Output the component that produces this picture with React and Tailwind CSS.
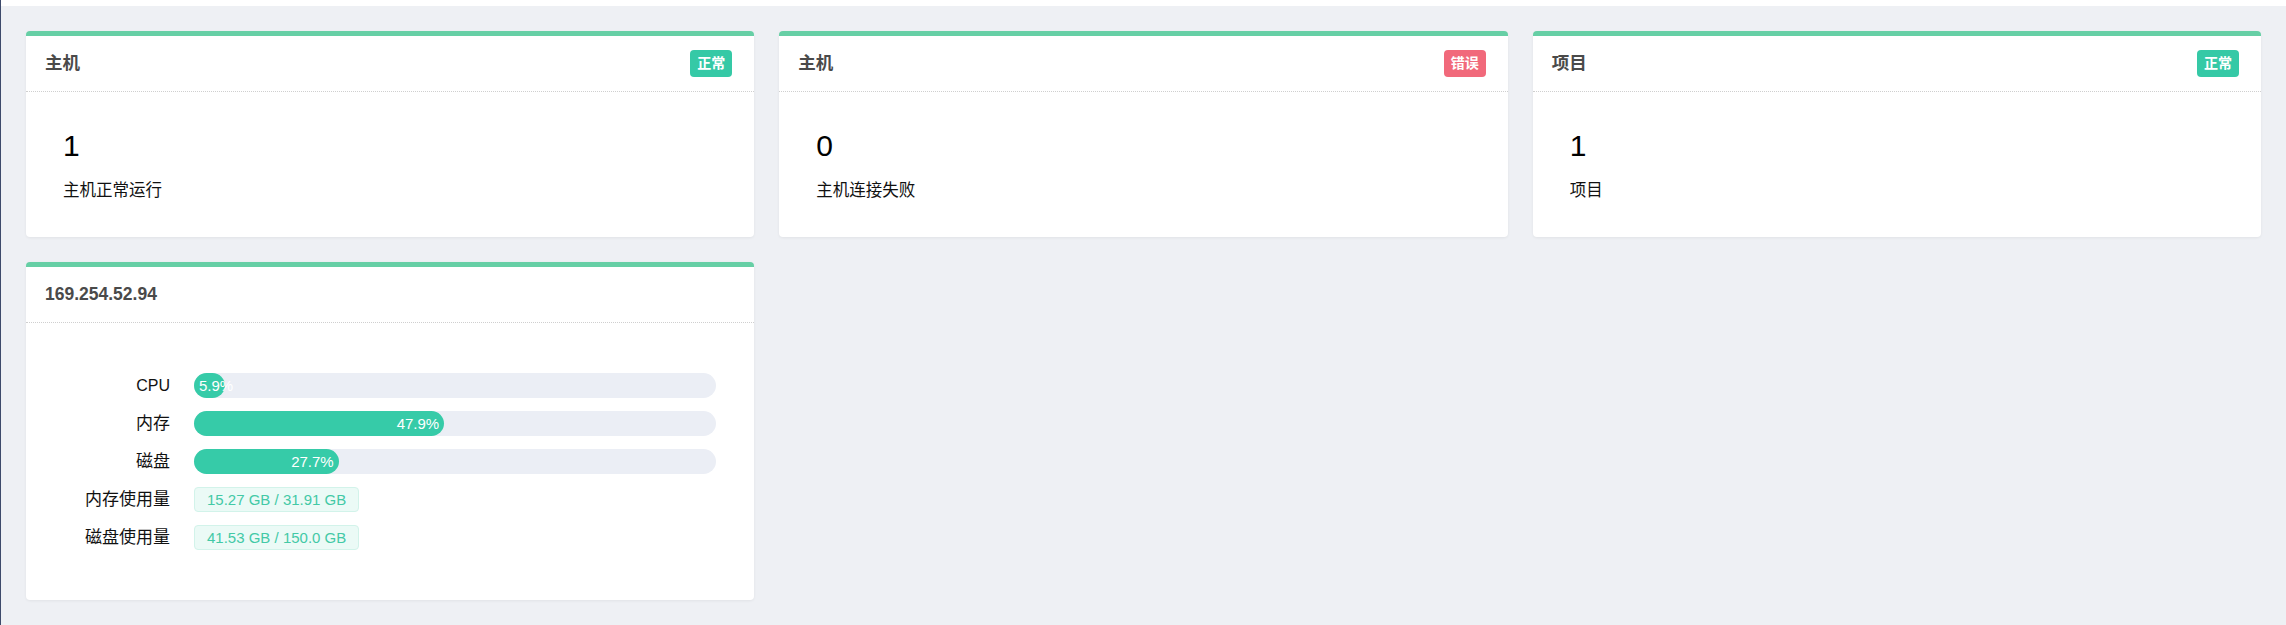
import React from "react";

const stats = [
  { title: "主机", badge: "正常", ok: true, value: "1", label: "主机正常运行" },
  { title: "主机", badge: "错误", ok: false, value: "0", label: "主机连接失败" },
  { title: "项目", badge: "正常", ok: true, value: "1", label: "项目" },
];

const bars = [
  { name: "CPU", pct: 5.9 },
  { name: "内存", pct: 47.9 },
  { name: "磁盘", pct: 27.7 },
];

const usage = [
  { name: "内存使用量", text: "15.27 GB / 31.91 GB" },
  { name: "磁盘使用量", text: "41.53 GB / 150.0 GB" },
];

const Card = ({ title, badge, children }) => (
  <div className="bg-white rounded-[4px] border-t-[5px] border-[#66cfa5] shadow-[0_1px_3px_rgba(0,0,0,0.06)]">
    <div className="h-[55px] flex items-center justify-between pl-[19px] pr-[22px]">
      <span className="text-[17.5px] font-bold text-[#4a4a4a]">{title}</span>
      {badge}
    </div>
    <div className="border-t border-dotted border-[#cfcfcf]" />
    {children}
  </div>
);

const Badge = ({ ok, children }) => (
  <span
    className={
      ok
        ? "h-[27px] leading-[27px] px-[7px] rounded-[4px] text-[14px] font-bold text-white bg-[#35c9a6]"
        : "h-[27px] leading-[27px] px-[7px] rounded-[4px] text-[14px] font-bold text-white bg-[#f1697b]"
    }
  >
    {children}
  </span>
);

const Label = ({ children, latin }) => (
  <div className={latin ? "w-[106px] text-right text-[16px] text-[#111]" : "w-[106px] text-right text-[17px] text-[#111]"}>
    {children}
  </div>
);

export default function App() {
  return (
    <div className="flex h-[625px] font-['Liberation_Sans','Noto_Sans_CJK_SC',sans-serif]">
      <div className="w-px bg-[#3d4a6b]" />
      <div className="flex-1 flex flex-col">
        <div className="h-[6px] bg-white" />
        <div className="flex-1 bg-[#eef0f4] p-[25px]">
          <div className="grid grid-cols-3 gap-[25px]">
            {stats.map((s, i) => (
              <Card key={i} title={s.title} badge={<Badge ok={s.ok}>{s.badge}</Badge>}>
                <div className="pt-[39px] pb-[35px] pl-[37px]">
                  <div className="text-[30px] leading-[30px] text-black">{s.value}</div>
                  <div className="mt-[17px] text-[16.5px] leading-[24px] text-[#111]">{s.label}</div>
                </div>
              </Card>
            ))}
          </div>

          <div className="grid grid-cols-3 gap-[25px] mt-[25px]">
            <Card title="169.254.52.94">
              <div className="pt-[50px] pb-[50px] px-[38px] flex flex-col gap-[13px]">
                {bars.map((b) => (
                  <div key={b.name} className="flex items-center h-[25px]">
                    <Label latin={b.name === "CPU"}>{b.name}</Label>
                    <div className="ml-[24px] flex-1 h-[25px] rounded-full bg-[#ebeef5]">
                      <div
                        className="h-full rounded-full bg-[#36cba8] text-right whitespace-nowrap leading-[25px]"
                        style={{ width: `${b.pct}%` }}
                      >
                        <span className="inline-block mx-[5px] text-[15px] text-white">{b.pct}%</span>
                      </div>
                    </div>
                  </div>
                ))}
                {usage.map((u) => (
                  <div key={u.name} className="flex items-center h-[25px]">
                    <Label>{u.name}</Label>
                    <div className="ml-[24px] h-[25px] leading-[23px] px-[12px] rounded-[4px] border border-[#d2f3ea] bg-[#ebfaf6] text-[15px] text-[#43c9a6]">
                      {u.text}
                    </div>
                  </div>
                ))}
              </div>
            </Card>
          </div>
        </div>
      </div>
    </div>
  );
}
